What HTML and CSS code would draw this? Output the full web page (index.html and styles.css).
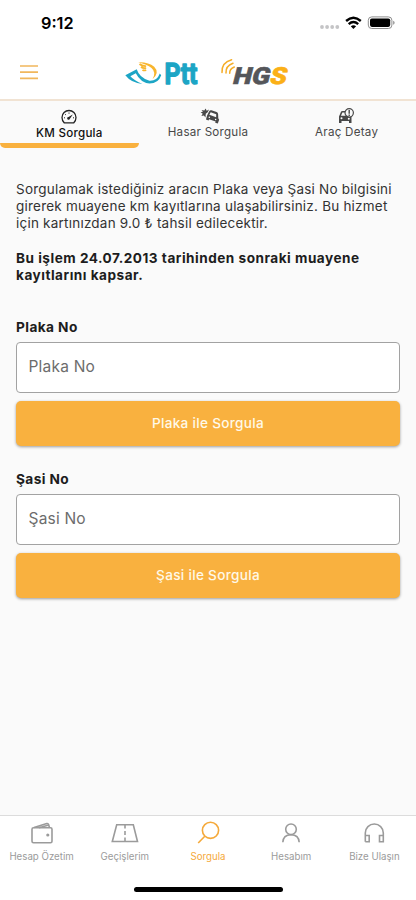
FILE: index.html
```html
<!DOCTYPE html>
<html lang="tr">
<head>
<meta charset="utf-8">
<meta name="viewport" content="width=device-width">
<title>Sorgula</title>
<link rel="stylesheet" href="styles.css">
</head>
<body>
<div class="app">
  <div class="status">
    <span class="time">9:12</span>
    <svg class="status-icons" width="76" height="14" viewBox="319 16 76 14">
      <g fill="#c4c4c6"><circle cx="322" cy="27" r="1.9"/><circle cx="327.1" cy="27" r="1.9"/><circle cx="332.2" cy="27" r="1.9"/><circle cx="337.3" cy="27" r="1.9"/></g>
      <g fill="none" stroke="#000" stroke-width="2.4"><path d="M346.1 21Q353.4 14.500 360.800 21"/><path d="M348.700 24.200Q353.400 20 358.200 24.200"/></g>
      <path d="M350.800 26.200Q353.400 24.200 356.100 26.200L353.400 28.900Z"/>
      <rect x="368.3" y="16.9" width="23.6" height="11.6" rx="3.4" fill="none" stroke="#8e8e8e"/>
      <rect x="370" y="18.5" width="20.2" height="8.4" rx="1.8"/>
      <path d="M393.2 20.7Q394.6 21.3 394.6 22.7T393.2 24.7Z" fill="#8e8e8e"/>
    </svg>
  </div>
  <header class="header">
    <svg class="menu" width="18" height="15" viewBox="0 0 18 15"><path d="M0 1H18M0 7.2H18M0 13.4H18" stroke="#f1b75c" stroke-width="1.7"/></svg>
    <svg class="logos" width="170" height="36" viewBox="122 56 170 36">
      <path d="M125.3 76.300L136.700 70.300Q139.500 79 149.500 81.800Q157 82.200 159.800 74.500L161.200 76.300Q158.500 84.600 149.500 84.600Q140.500 83.500 135.800 74.200L130.400 77.200Q134 81.500 142.500 84.900Q131.500 84.300 125.300 76.300Z" fill="#1ca5c5"/>
      <path d="M138.200 63.200Q148.500 62.800 154.200 67.700Q160 73.600 152.500 80.200Q156.500 73.300 151.500 69Q147 65.300 138.200 63.200Z" fill="#f8b52d"/>
      <path d="M139.500 65Q142 67.300 146.200 67M141 68Q143 69.700 146.200 69M142.500 70.800Q144 72 146.200 71" fill="none" stroke="#f8b52d" stroke-width="1.700"/>
      <text class="ptt" x="164.500" y="84.600" textLength="33" lengthAdjust="spacingAndGlyphs">Ptt</text>
      <g fill="none" stroke="#f5ad27" stroke-linecap="round"><path d="M222 73.500Q221.500 63.500 231.600 60.800" stroke-width="1.500"/><path d="M226 74Q225.500 67 233 64.300" stroke-width="1.500"/><path d="M229.700 74.200Q229.500 70 234.300 68" stroke-width="1.500"/></g>
      <g transform="translate(231.800 84.700) skewX(-14)"><text class="hgs" textLength="53.500" lengthAdjust="spacingAndGlyphs">HG<tspan fill="#fbb017" stroke="#fbb017">S</tspan></text></g>
    </svg>
  </header>
  <nav class="tabs">
    <a class="tab active">
      <svg width="16" height="15" viewBox="0 0 16 15"><path d="M3.200 13.300H12.800Q15 11 15 8A7 7 0 0 0 1 8Q1 11 3.200 13.300Z" fill="none" stroke="#222" stroke-width="1.300"/><path d="M3 8.300H4M4.200 4.800L5 5.500M8 3V4.200M12 8.300H13" stroke="#222"/><path d="M11.800 5L8.900 9.200A1.400 1.400 0 1 1 7.500 7.500Z" fill="#222"/></svg>
      <span>KM Sorgula</span>
    </a>
    <a class="tab">
      <svg class="crash" width="20" height="17" viewBox="0 0 20 17"><path d="M1 2L4 2.600L5.300.500L6.500 3L9 1.500L7.500 4.500L5.500 6L5.200 10L3.500 8L.800 8.600L2.300 6L0 4.500L2.500 4Z" fill="#484848"/><path d="M6.900 8L9 3.600Q9.800 2 11.500 2.400L17 4.200Q18.500 4.800 18.600 6.500L18.800 11L19.700 12.500L18.300 16.600L15.500 15.700L16 14.400L9 11.900L8.500 13.200L5.700 12.200Z" fill="#484848"/><path d="M9.300 7.300L10.700 4.500L16.600 6.600L16.500 9.900Z" fill="#fafafa"/><circle cx="9.300" cy="9.900" r=".8" fill="#fff"/><circle cx="16" cy="12.200" r=".8" fill="#fff"/></svg>
      <span>Hasar Sorgula</span>
    </a>
    <a class="tab">
      <svg width="17" height="16" viewBox="0 0 17 16"><path d="M1 15V8.500L3 3.800Q3.300 3 4.500 3H12L13.500 8.500V15H11V13H3.500V15Z" fill="#484848"/><path d="M3 7.800L4.400 4.500H8L9 7.800Z" fill="#fafafa"/><circle cx="3.500" cy="10.300" r="1" fill="#fff"/><circle cx="10.800" cy="10.700" r="1" fill="#fff"/><circle cx="11.200" cy="4.800" r="4.200" fill="#fafafa" stroke="#484848" stroke-width="1.200"/><path d="M11.200 2V5.700M11.200 6.600V8" stroke="#484848" stroke-width="1.400"/></svg>
      <span>Araç Detay</span>
    </a>
  </nav>
  <main class="content">
    <p class="intro">Sorgulamak istediğiniz aracın Plaka veya Şasi No bilgisini<br>girerek muayene km kayıtlarına ulaşabilirsiniz. Bu hizmet<br>için kartınızdan 9.0 ₺ tahsil edilecektir.</p>
    <p class="notice">Bu işlem 24.07.2013 tarihinden sonraki muayene<br>kayıtlarını kapsar.</p>
    <form class="query">
      <label for="plaka">Plaka No</label>
      <input id="plaka" placeholder="Plaka No">
      <button type="button">Plaka ile Sorgula</button>
    </form>
    <form class="query">
      <label for="sasi">Şasi No</label>
      <input id="sasi" placeholder="Şasi No">
      <button type="button">Şasi ile Sorgula</button>
    </form>
  </main>
  <footer class="bottom">
    <nav class="bar">
      <a><svg width="28" height="24" viewBox="0 0 28 24"><rect x="4" y="6.800" width="20" height="15" rx="1.500"/><path d="M6 6.500L18.800 2.500Q20.200 2.200 20.600 3.500L21.400 6.500M11 6.700L19.900 4.200"/><circle cx="19.800" cy="14" r=".8"/></svg><span>Hesap Özetim</span></a>
      <a><svg width="28" height="24" viewBox="0 0 28 24"><path d="M5.700 3.800H22.300L26.500 20.500H1.300ZM14 4V7.500M14 10V14M14 16.500V20.500"/></svg><span>Geçişlerim</span></a>
      <a class="selected"><svg width="28" height="24" viewBox="0 0 28 24"><circle cx="16.500" cy="9.300" r="8.100"/><path d="M10.800 15.200L4.200 22"/></svg><span>Sorgula</span></a>
      <a><svg width="28" height="24" viewBox="0 0 28 24"><circle cx="14" cy="8.300" r="5.300"/><path d="M5.800 21.300Q6.200 13.700 14 13.700T22.200 21.300"/></svg><span>Hesabım</span></a>
      <a><svg width="28" height="24" viewBox="0 0 28 24"><path d="M5.300 20.700V12A9 9 0 0 1 23.300 12V20.700H19.500V14.500H23.300M5.300 14.500H9.200V20.700H5.300"/></svg><span>Bize Ulaşın</span></a>
    </nav>
    <div class="home"></div>
  </footer>
</div>
</body>
</html>
```
FILE: styles.css
```css
* { box-sizing: border-box; }
body { margin: 0; font-family: Inter, "Liberation Sans", sans-serif; color: #333; background: #fafafa; }
svg { display: block; flex: none; }
.app { height: 900px; display: flex; flex-direction: column; overflow: hidden; }
.status { height: 46px; padding: 0 21px 0 41px; display: flex; align-items: center; justify-content: space-between; background: #fff; flex: none; }
.time { font-size: 16.3px; font-weight: 600; color: #000; }
.header { height: 55px; padding: 0 20px; display: flex; align-items: center; background: #fff; border-bottom: 2px solid #f1e3d3; flex: none; }
.logos { margin-left: 84px; }
.ptt { font: 700 29px Roboto, sans-serif; fill: #1ca5c5; stroke: #1ca5c5; stroke-width: 1.3px; stroke-linejoin: round; }
.hgs { font: 900 23.5px Roboto, sans-serif; fill: #55565a; stroke: #55565a; stroke-width: .6px; }
.tabs { display: grid; grid-template-columns: repeat(3, 1fr); height: 47px; flex: none; }
.tab { display: flex; flex-direction: column; align-items: center; padding-top: 7px; font-size: 11.6px; line-height: 16px; letter-spacing: .25px; color: #484848; }
.tab svg { height: 16px; }
.tab .crash { margin-left: 4px; }
.tab.active { color: #111; padding-top: 8px; font-weight: 500; }
.tab.active::after { content: ""; width: 100%; height: 5px; margin-top: auto; background: #f9b13f; border-radius: 0 0 5px 5px; }
.content { flex: 1; padding: 33px 16px 0; }
.intro, .notice { margin: 0; font-size: 13.5px; line-height: 17.2px; white-space: nowrap; letter-spacing: .22px; }
.notice { margin-top: 17.5px; font-size: 13.6px; font-weight: 700; letter-spacing: .5px; color: #1d1d1d; }
.query { display: flex; flex-direction: column; margin-top: 34px; }
.query + .query { margin-top: 24.5px; }
.query label { font-size: 13.7px; line-height: 17px; font-weight: 700; letter-spacing: .4px; color: #1d1d1d; margin-bottom: 6.5px; }
.query input { height: 51px; border: 1px solid #a2a2a2; border-radius: 4px; padding: 0 11.5px 2px; background: #fff; font: 400 15.5px Inter, sans-serif; letter-spacing: .2px; }
.query input::placeholder { color: #6c6c6c; opacity: 1; }
.query button { height: 45.5px; margin-top: 7.5px; padding-bottom: 2px; border: 0; border-radius: 5px; background: #f9b13f; color: #fff9e8; font: 500 13.6px Inter, sans-serif; letter-spacing: .3px; box-shadow: 0 1px 3px rgba(0,0,0,.38); }
.bottom { height: 85px; background: #fff; border-top: 1px solid #dcdcdc; display: flex; flex-direction: column; align-items: center; flex: none; }
.bar { width: 100%; height: 71px; display: grid; grid-template-columns: repeat(5, 1fr); padding-top: 5px; }
.bar a { display: flex; flex-direction: column; align-items: center; color: #9b9b9b; font-size: 9.7px; line-height: 14px; gap: 5px; white-space: nowrap; }
.bar svg { fill: none; stroke: currentColor; stroke-width: 1.6; }
.bar .selected { color: #f5a93a; }
.home { width: 149px; height: 5px; border-radius: 3px; background: #000; }
```
